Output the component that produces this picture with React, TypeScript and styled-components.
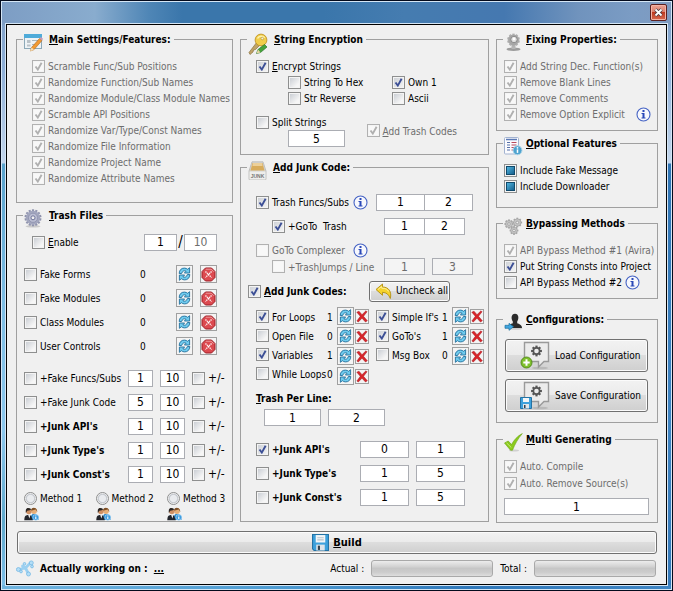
import React from "react";
import styled, { createGlobalStyle, css } from "styled-components";

const ui = `"DejaVu Sans Condensed", "DejaVu Sans", Tahoma, sans-serif`;

const GlobalStyle = createGlobalStyle`
  * { box-sizing: border-box; }
  body {
    margin: 0;
    color: #000;
    font: 10px/16px ${ui};
  }
`;

/* ---------- window frame ---------- */

const Frame = styled.div`
  min-height: 100vh;
  display: flex;
  flex-direction: column;
  border: 1px solid #030a1c;
  box-shadow: inset 0 0 0 1px #d5e6f5;
  padding: 1px 4px 4px;
  background:
    linear-gradient(90deg, #7d9dc4 0, #89acce 14%, #4f86b6 22%, #3a76ab 27%, #3a76ab 48%, #457cb0 60%, #4578b0 75%, #7093bd 86%, #7b9cc4 94%, #7f9bc0 100%) top / 100% 24px no-repeat,
    linear-gradient(90deg, #6fb4df, #4f9dd3 40%, #2f78ba 70%, #3f86c4) bottom / 100% 5px no-repeat,
    linear-gradient(180deg, #7d9dc4 0, #8fb0d8 70px, #c3d6ec 162px, #59a3cd 163px, #7dbde4 300px, #8cc8ee 430px, #5fa9cc 520px, #7fc0ea 100%) left / 50% 100% no-repeat,
    linear-gradient(180deg, #7d9dc4 0, #8fb0d8 70px, #c3d6ec 162px, #2f74b4 163px, #3f84c2 420px, #3478b8 100%) right / 50% 100% no-repeat;
`;

const TitleBar = styled.header`
  height: 21px;
  display: flex;
  justify-content: flex-end;
  align-items: center;
  padding-right: 1px;
`;

const CloseButton = styled.button`
  width: 17px;
  height: 17px;
  padding: 0;
  display: grid;
  place-items: center;
  border: 1px solid #5b2020;
  border-radius: 2px;
  box-shadow: inset 0 0 0 1px #f3b4a6;
  background: linear-gradient(#eca293 0, #dd7f6c 48%, #bf3a20 50%, #d96a50 100%);
`;

const Client = styled.main`
  flex: 1;
  border: 1px solid #000;
  outline: 1px solid #d5e6f5;
  margin: 1px;
  background: #f0f0f0;
  padding: 8px 8px 5px 9px;
`;

const Columns = styled.div`
  display: grid;
  grid-template-columns: 217fr 249fr 162fr;
  gap: 7px;
`;

const Column = styled.div`
  min-width: 0;
  display: flex;
  flex-direction: column;
`;

/* ---------- groups ---------- */

const GroupBox = styled.fieldset<{ $before?: number }>`
  min-width: 0;
  margin: ${(p) => p.$before ?? 0}px 0 0;
  padding: 0;
  border: 1px solid #a0a0a0;
`;

const GroupTitle = styled.legend<{ $tight?: boolean }>`
  display: flex;
  gap: ${(p) => (p.$tight ? 3 : 6)}px;
  height: 13px;
  margin-left: 6px;
  padding: 0 3px 0 1px;
  font: bold 10px/14px ${ui};
  white-space: nowrap;
  svg { flex: none; }
`;

const Body = styled.div<{ $top: number; $bottom: number; $left?: number; $right?: number }>`
  display: flex;
  flex-direction: column;
  padding: ${(p) => `${p.$top}px ${p.$right ?? 7}px ${p.$bottom}px ${p.$left ?? 7}px`};
`;

const Row = styled.div<{ $h?: number; $indent?: number; $end?: number; $gap?: number; $top?: number }>`
  display: flex;
  align-items: center;
  gap: ${(p) => p.$gap ?? 7}px;
  min-height: ${(p) => p.$h ?? 16}px;
  margin-top: ${(p) => p.$top ?? 0}px;
  padding-left: ${(p) => p.$indent ?? 0}px;
  padding-right: ${(p) => p.$end ?? 0}px;
`;

const Push = styled.div`
  margin-left: auto;
  display: flex;
  align-items: center;
`;

const RangeRow = styled.div`
  display: grid;
  grid-template-columns: 1fr 25px 25px 33px;
  column-gap: 7px;
  align-items: center;
  height: 24px;
`;

/* ---------- controls ---------- */

const CheckLabel = styled.label<{ $off?: boolean; $bold?: boolean }>`
  display: flex;
  align-items: center;
  gap: 3px;
  min-width: 0;
  white-space: pre;
  color: ${(p) => (p.$off ? "#6d6d6d" : "#000")};
  font-weight: ${(p) => (p.$bold ? "bold" : "normal")};
  line-height: 15px;
  span { padding-top: 1px; }
`;

const tick = (c: string) =>
  `url("data:image/svg+xml,%3Csvg xmlns='http://www.w3.org/2000/svg' width='11' height='11'%3E%3Cpath d='M2.5 5.5L4.8 8.6L8.6 1.8' fill='none' stroke='%23${c}' stroke-width='1.9'/%3E%3C/svg%3E")`;

const Box = styled.input.attrs({ type: "checkbox" })`
  appearance: none;
  flex: none;
  width: 13px;
  height: 13px;
  margin: 0;
  border: 1px solid #8e8f8f;
  box-shadow: inset 0 0 0 1px #f4f4f4;
  background: linear-gradient(135deg, #cbcfd5, #f6f6f6 80%) center / 9px 9px no-repeat #f4f4f4;
  &:checked {
    background: ${tick("3c4f96")} center no-repeat, linear-gradient(135deg, #cbcfd5, #f6f6f6);
  }
  &:disabled { border-color: #b1b1b1; background: #f8f8f8; }
  &:disabled:checked { background: ${tick("b0b0b0")} center no-repeat, #f8f8f8; }
  &[data-mixed="true"] {
    box-shadow: none;
    background: linear-gradient(135deg, #4fb4de, #17618f) center / 7px 7px no-repeat,
      linear-gradient(#114a6c, #114a6c) center / 9px 9px no-repeat, #f4f4f4;
  }
`;

const Dot = styled.input.attrs({ type: "radio" })`
  appearance: none;
  flex: none;
  width: 13px;
  height: 13px;
  margin: 0;
  border: 1px solid #8e8f8f;
  border-radius: 50%;
  background: radial-gradient(circle, #e9ebee 0 40%, #c2c6cc 55%, #f4f4f4 68%);
  &:checked { background: radial-gradient(circle, #2a6f9c 0 35%, #f4f4f4 45%); }
`;

const Num = styled.input<{ $w?: number; $join?: boolean }>`
  width: ${(p) => (p.$w ? `${p.$w}px` : "100%")};
  min-width: 0;
  height: 17px;
  padding: 0;
  border: 1px solid #abadb3;
  border-radius: 0;
  background: #fff;
  color: #000;
  text-align: center;
  font: 12px/15px ${ui};
  ${(p) => p.$join && css`margin-left: -1px;`}
  &:disabled { color: #6d6d6d; }
  &[data-flat="true"] { background: #f4f4f4; }
`;

const Slash = styled.span`
  width: 7px;
  font: 15px/17px ${ui};
  text-align: center;
`;

const Count = styled.span<{ $w: number }>`
  width: ${(p) => p.$w}px;
  line-height: 15px;
  padding-top: 1px;
`;

const Sign = styled.label`
  display: flex;
  align-items: center;
  gap: 3px;
  font: 12px/16px ${ui};
`;

const ToolButton = styled.button<{ $small?: boolean }>`
  flex: none;
  width: ${(p) => (p.$small ? 14 : 17)}px;
  height: ${(p) => (p.$small ? 15 : 18)}px;
  padding: 0;
  display: grid;
  place-items: center;
  border: 1px solid #a0a0a0;
  background: #f4f4f4;
`;

const RaisedButton = styled.button`
  display: flex;
  align-items: center;
  padding: 0;
  border: 1px solid #707070;
  border-radius: 3px;
  box-shadow: inset 0 0 0 1px #fbfbfb;
  background: linear-gradient(#f2f2f2 0, #ebebeb 48%, #dddddd 50%, #cfcfcf 100%);
  color: #000;
  font: 10px/16px ${ui};
  white-space: nowrap;
`;

const SmallButton = styled(RaisedButton)`
  width: 81px;
  height: 21px;
  padding-left: 5px;
  gap: 3px;
`;

const ConfigButton = styled(RaisedButton)`
  height: 33px;
  padding-left: 14px;
  gap: 4px;
`;

const BuildButton = styled(RaisedButton)`
  width: calc(100% - 2px);
  height: 23px;
  margin: 8px 1px 0;
  justify-content: center;
  gap: 4px;
  font: bold 11px/16px ${ui};
`;

const Heading = styled.h3`
  margin: 0;
  font: bold 10px/16px ${ui};
`;

const ConfigList = styled.div`
  display: grid;
  grid-template-columns: minmax(0, 1fr);
  gap: 7px;
`;

const SplitArea = styled.div`
  display: flex;
  justify-content: space-between;
  align-items: center;
  padding: 8px 23px 0 0;
`;

const Own = styled.div`
  display: grid;
  grid-template-columns: 104px auto;
  padding-left: 32px;
`;

const Loops = styled.div`
  display: grid;
  grid-template-columns: auto auto;
  justify-content: space-between;
  align-items: start;
  padding: 4px 4px 0 8px;
`;

const LoopBlock = styled.div<{ $w: number }>`
  display: grid;
  grid-template-columns: ${(p) => p.$w}px auto;
`;

const LoopRow = styled.div`
  display: flex;
  align-items: center;
  justify-content: space-between;
  padding-right: 3px;
  height: 19px;
`;

const ActionRow = styled.div`
  display: flex;
  align-items: center;
  gap: 1px;
  height: 18px;
  margin-bottom: 2px;
`;

const Methods = styled.div`
  display: grid;
  grid-template-columns: 1fr 1fr 58px;
  padding-top: 4px;
`;

const Method = styled.div`
  display: grid;
  gap: 1px;
`;

const StatusBar = styled.footer`
  display: flex;
  align-items: center;
  margin-top: 5px;
  height: 19px;
  white-space: nowrap;
`;

const Working = styled.span`
  flex: 1;
  display: flex;
  align-items: center;
  gap: 6px;
  font-weight: bold;
`;

const Meter = styled.div`
  width: 122px;
  height: 17px;
  margin: 0 7px 0 7px;
  border: 1px solid #a9a9a9;
  border-radius: 3px;
  background: linear-gradient(#ececec 0, #d4d4d4 35%, #c6c6c6 50%, #cccccc 75%, #dedede 100%);
  &:last-child { margin-right: 2px; }
`;

/* ---------- icons ---------- */

const FormIcon = () => (
  <svg width="19" height="19" viewBox="0 0 19 19">
    <rect x="0.5" y="1.5" width="17" height="14" fill="#eef3f6" stroke="#8da9b8" />
    <rect x="0" y="1" width="18" height="4" fill="#4fabd9" />
    <path d="M3 7h3.500v3H3zM3 11.500h3.500v2H3z" fill="#b9c2c8" />
    <path d="M8 7.500h6M8 11.500h4" stroke="#aab8c0" />
    <path d="M7.500 14.500L15.500 5.500L18 7.600L10 16.600L6.400 18Z" fill="#f29a32" stroke="#a7651d" strokeWidth=".6" />
    <path d="M15.500 5.500L17 3.900L19 5.800L18 7.600Z" fill="#c79ab8" />
    <path d="M7.500 14.500L10 16.600L6 18.400Z" fill="#f5dfb8" />
  </svg>
);

const gearTeeth = (cx: number, cy: number, r: number, n: number, w: number, color: string) =>
  Array.from({ length: n }, (_, i) => (
    <rect key={i} x={cx - w / 2} y={cy - r} width={w} height={r} fill={color} transform={`rotate(${(i * 360) / n} ${cx} ${cy})`} />
  ));

const GearIcon = () => (
  <svg width="19" height="19" viewBox="0 0 19 19">
    <ellipse cx="9" cy="17.300" rx="7.500" ry="1.200" fill="#cacaca" />
    {gearTeeth(9, 8.8, 8.5, 14, 2.2, "#8f93ad")}
    <circle cx="9" cy="8.800" r="7.100" fill="#a3a7bf" />
    <circle cx="9" cy="8.800" r="4.600" fill="#babdd2" stroke="#8d91ac" strokeWidth=".8" />
    <circle cx="9" cy="8.800" r="2" fill="#f0f0f0" stroke="#70759a" />
  </svg>
);

const KeyIcon = () => (
  <svg width="20" height="22" viewBox="0 0 20 22">
    <path d="M9 9L1 19.500L2 21.500L5 19L5.500 17L7.500 16.500L12 12Z" fill="#c0a468" stroke="#8d7443" strokeWidth=".7" />
    <circle cx="13" cy="7" r="5.900" fill="#f0cd4a" stroke="#bb8d1d" strokeWidth=".8" />
    <path d="M9.500 5.500C11 2.500 15 2.500 16.500 5" fill="none" stroke="#fdf1ad" strokeWidth="1.600" />
    <circle cx="14.300" cy="5.500" r="1.300" fill="#f4f0dc" stroke="#a8821d" strokeWidth=".5" />
    <path d="M10 16.500L16.500 11.500L19 14L12.500 19.500L8.500 20.500Z" fill="#45a33b" stroke="#2b7328" strokeWidth=".7" />
    <path d="M10 16.500L12.500 19.500L8.500 20.500Z" fill="#e9d6a2" />
  </svg>
);

const JunkIcon = () => (
  <svg width="19" height="20" viewBox="0 0 19 20">
    <path d="M1 10L4 .8H15L18 10V18.500H1Z" fill="#d5d5d3" stroke="#b7b7b5" strokeWidth=".8" />
    <path d="M4.500 2H14.500L16.500 9.500H2.500Z" fill="#d8ac5c" />
    <path d="M5 2H14L14.600 5H4.400Z" fill="#ecd09a" />
    <rect x="1.500" y="10.500" width="16" height="8" fill="#eeeeec" />
    <text x="9.500" y="16.500" textAnchor="middle" fontSize="5" fontWeight="bold" fontFamily="Liberation Sans, sans-serif" fill="#777">JUNK</text>
  </svg>
);

const CamIcon = () => (
  <svg width="19" height="19" viewBox="0 0 19 19">
    <ellipse cx="9.500" cy="16.300" rx="7" ry="1.700" fill="#9c9c9c" />
    <path d="M7.500 11h4v5h-4z" fill="#b5b5b5" />
    {gearTeeth(9.5, 7, 6.4, 10, 2.4, "#b2b2b2")}
    <circle cx="9.500" cy="7" r="5.400" fill="#a6a6a6" />
    <circle cx="10" cy="6.500" r="3.200" fill="#dedede" stroke="#7c7c7c" strokeWidth=".8" />
    <circle cx="10" cy="6" r="1.400" fill="#fff" />
  </svg>
);

const SheetIcon = () => (
  <svg width="19" height="19" viewBox="0 0 19 19">
    <rect x="0.500" y="0.500" width="14" height="16.500" rx="1" fill="#fbfbfe" stroke="#a3b3d0" />
    <path d="M2 2.500h11" stroke="#5b79b5" strokeWidth="1.500" />
    <path d="M3 5.500h3M3 8h3M3 10.500h3M3 13h3" stroke="#5570a8" />
    <path d="M7.500 5.500h5M7.500 8h5M7.500 10.500h5M7.500 13h3" stroke="#b8495a" />
    <circle cx="13.500" cy="13.300" r="4.500" fill="#4ea3d0" stroke="#b3d7e8" />
    <path d="M13.500 12.400v3.500" stroke="#fff" strokeWidth="1.500" />
    <circle cx="13.500" cy="10.800" r=".9" fill="#fff" />
  </svg>
);

const GearsIcon = () => (
  <svg width="19" height="19" viewBox="0 0 19 19">
    {[[5, 7, 4.6], [13.3, 5.5, 4.8], [10, 13.5, 4.4]].map(([x, y, r], i) => (
      <g key={i}>
        {gearTeeth(x, y, r, 8, 1.8, "#a6a6a6")}
        <circle cx={x} cy={y} r={r - 1.1} fill="#c4c4c4" stroke="#9c9c9c" strokeWidth=".6" />
        <circle cx={x} cy={y} r="1.300" fill="#f0f0f0" stroke="#8a8a8a" strokeWidth=".6" />
      </g>
    ))}
  </svg>
);

const UserIcon = () => (
  <svg width="19" height="19" viewBox="0 0 19 19">
    <ellipse cx="11" cy="15.500" rx="7.500" ry="1.300" fill="#cfcfcf" />
    <path d="M4 15C4 11.500 7 11 8.800 10.200V8.500C6.800 5.500 7.200 .8 11 .8S15.200 5.500 13.200 8.500V10.200C15 11 18 11.500 18 15Z" fill="#2b2b2b" />
    <path d="M1 12.300H5V10.300L9.500 13.800L5 17.300V15.300H1Z" fill="#3fa6e0" stroke="#1d6e9e" strokeWidth=".7" />
  </svg>
);

const CheckIcon = () => (
  <svg width="19" height="20" viewBox="0 0 19 20">
    <ellipse cx="10" cy="17.500" rx="5" ry="1" fill="#d0d0d0" />
    <path d="M.5 10L4.200 8L7.500 11.500C10 7 13.500 3 18.300 .6C14 5.500 11 11 8.500 17.200H6.500Z" fill="#8bcb1c" stroke="#66a30e" strokeWidth=".6" />
    <path d="M2.500 9.800L7.300 14.500" stroke="#c6ec7c" />
  </svg>
);

const InfoIcon = () => (
  <svg width="15" height="15" viewBox="0 0 15 15">
    <circle cx="7.500" cy="7.500" r="6.500" fill="#f7f8fd" stroke="#4563c4" strokeWidth="1.100" />
    <rect x="6.500" y="3" width="2" height="2" fill="#2a48b8" />
    <path d="M5.500 6h3v4.500H9.500v1h-4v-1H6.500V7h-1Z" fill="#2a48b8" />
  </svg>
);

const RefreshIcon = () => (
  <svg width="13" height="14" viewBox="0 0 13 14">
    <path d="M1.200 6.500C1.200 3 3.500 1.100 6.300 1.100C7.800 1.100 8.800 1.600 9.600 2.300L11.600 .7V6H6.400L8.100 4.200C6.500 3.300 4.300 3.800 3.600 6.500Z" fill="#6fcbee" stroke="#226f9c" strokeWidth=".9" />
    <path d="M11.800 7.500C11.800 11 9.500 12.900 6.700 12.900C5.200 12.900 4.200 12.400 3.400 11.700L1.400 13.300V8H6.600L4.900 9.800C6.500 10.700 8.700 10.200 9.400 7.500Z" fill="#6fcbee" stroke="#226f9c" strokeWidth=".9" />
  </svg>
);

const StopIcon = () => (
  <svg width="15" height="15" viewBox="0 0 15 15">
    <path d="M4.500 1H10.500L14 4.500V10.500L10.500 14H4.500L1 10.500V4.500Z" fill="#dc4a50" stroke="#9c1f27" />
    <path d="M4.800 2.200H10.200L12.600 4.700" fill="none" stroke="#f09a9c" />
    <path d="M4.500 4.500L10.500 10.500M10.500 4.500L4.500 10.500" stroke="#fff" strokeWidth="1.300" strokeDasharray="1.300 .7" />
  </svg>
);

const CrossIcon = () => (
  <svg width="12" height="13" viewBox="0 0 12 13">
    <path d="M.8 2.200L3 1.200L6 4.700L10 .8L11 1.800L7.500 6.300L11.300 10.700L9.500 12L6 8.200L2.300 12L.9 11L4.300 6.300Z" fill="#d8252a" stroke="#a5151b" strokeWidth=".5" />
  </svg>
);

const UndoIcon = () => (
  <svg width="18" height="17" viewBox="0 0 18 17">
    <path d="M1 6.500L7.500 1V4C13.500 4 17 8.500 15.300 15.500C13.800 11.500 11.500 9.500 7.500 9.300V12.300Z" fill="#f6d32c" stroke="#b28f12" strokeWidth=".9" />
    <path d="M3 6.500L6.700 3.400V5.200C10.500 5.200 12.500 6.200 13.600 8.500" fill="none" stroke="#fdf0a0" />
  </svg>
);

const Floppy = ({ s = 16 }: { s?: number }) => (
  <svg width={s} height={s} viewBox="0 0 16 16">
    <path d="M.5 .5H15.500V15.500H2L.5 14Z" fill="#3da1dc" stroke="#2473a5" />
    <rect x="3.500" y="1" width="9" height="7" fill="#f3f6f8" />
    <path d="M5 3.500h6M5 5.500h6" stroke="#b7c3cb" />
    <rect x="4" y="10" width="8" height="5.500" fill="#dfe5ea" />
    <rect x="5.500" y="11" width="2" height="4" fill="#33414d" />
  </svg>
);

const ConfigIcon = ({ save }: { save?: boolean }) => (
  <svg width="31" height="29" viewBox="0 0 31 29">
    <ellipse cx="20" cy="27" rx="8" ry="1.300" fill="#b9b9b9" />
    <path d="M4.500 1.500H28.500V20.500H24L18.500 26V20.500H4.500Z" fill="#ececec" stroke="#9a9a9a" strokeWidth="1.400" />
    {gearTeeth(16.5, 10, 5.4, 8, 2.2, "#555")}
    <circle cx="16.500" cy="10" r="3.900" fill="#555" />
    <circle cx="16.500" cy="10" r="2.300" fill="#ececec" />
    {save ? (
      <g transform="translate(0 16)">
        <path d="M.5 .5H11.500V11.500H.5Z" fill="#3da1dc" stroke="#2473a5" />
        <path d="M3 1h6v4H3z" fill="#f3f6f8" />
        <path d="M3 7h6v4.500H3z" fill="#dfe5ea" />
        <path d="M4 8h1.500v3H4z" fill="#33414d" />
      </g>
    ) : (
      <g>
        <circle cx="6.500" cy="21.500" r="5.500" fill="#7fc02c" stroke="#4e8517" strokeWidth=".9" />
        <path d="M6.500 18.300v6.400M3.300 21.500h6.400" stroke="#fff" strokeWidth="2" />
      </g>
    )}
  </svg>
);

const PeopleIcon = () => (
  <svg width="15" height="14" viewBox="0 0 15 14">
    <path d="M6.500 13V9.500L8.500 7H12L14.500 9.500V13Z" fill="#2d8bd0" />
    <circle cx="10" cy="4" r="2.900" fill="#e6ae78" />
    <path d="M7 3.800C7 -.3 13.300 -.3 13.300 5L11.800 2.600Z" fill="#7d4f26" />
    <path d="M.3 13.200C.3 9.500 1.500 8.300 3.500 8L7 8.500L8.800 13.200Z" fill="#23252c" />
    <circle cx="4.800" cy="4.600" r="2.700" fill="#cf9064" />
    <path d="M1.900 6C.8 .6 4.500 .2 7.400 2.300L5.800 3.300L3.200 3.800Z" fill="#2a2522" />
    <path d="M4.300 8L5.300 11.500L6.300 8.300Z" fill="#fff" />
    <circle cx="11.800" cy="10.300" r="2.900" fill="#3b9be0" stroke="#bfe0f6" strokeWidth=".6" />
    <path d="M11.800 8.500v.9M11.800 10v2" stroke="#fff" strokeWidth="1.100" />
  </svg>
);

const LinkIcon = () => (
  <svg width="18" height="17" viewBox="0 0 18 17">
    <path d="M2 9.500L9.500 8L14 3.200M9.500 8L12.300 13.500M9.500 8L6.500 6" fill="none" stroke="#9bd0f1" strokeWidth="2.800" strokeLinecap="round" />
    {[[2.4, 9.5, 2], [15.3, 2.9, 2], [12.5, 14, 2], [16, 6.5, 1.4], [8.5, 3.8, 1.3], [5, 11.5, 1.4]].map(([x, y, r], i) => (
      <circle key={i} cx={x} cy={y} r={r} fill="#b4def7" stroke="#6fb5e2" strokeWidth=".7" />
    ))}
  </svg>
);

/* ---------- composed parts ---------- */

type CheckProps = { text: string; on?: boolean; off?: boolean; bold?: boolean; u?: boolean; mixed?: boolean };

const Hot = ({ text }: { text: string }) => (
  <span>
    <u>{text[0]}</u>
    {text.slice(1)}
  </span>
);

const Check = ({ text, on, off, bold, u, mixed }: CheckProps) => (
  <CheckLabel $off={off} $bold={bold}>
    <Box defaultChecked={on} disabled={off} data-mixed={mixed} />
    {u ? <Hot text={text} /> : <span>{text}</span>}
  </CheckLabel>
);

type GroupProps = { title: string; icon: React.ReactNode; before?: number; tight?: boolean; children: React.ReactNode };

const Group = ({ title, icon, before, tight, children }: GroupProps) => (
  <GroupBox $before={before}>
    <GroupTitle $tight={tight}>
      {icon}
      <Hot text={title} />
    </GroupTitle>
    {children}
  </GroupBox>
);

const Refresh = ({ name }: { name: string }) => (
  <ToolButton type="button" aria-label={`Refresh ${name}`}>
    <RefreshIcon />
  </ToolButton>
);

type Loop = [string, number, boolean];

const LoopList = ({ items, width }: { items: Loop[]; width: number }) => (
  <LoopBlock $w={width}>
    <div>
      {items.map(([name, count, on]) => (
        <LoopRow key={name}>
          <Check text={name} on={on} />
          <Count $w={7}>{count}</Count>
        </LoopRow>
      ))}
    </div>
    <div>
      {items.map(([name]) => (
        <ActionRow key={name}>
          <Refresh name={name} />
          <ToolButton type="button" $small aria-label={`Clear ${name}`}>
            <CrossIcon />
          </ToolButton>
        </ActionRow>
      ))}
    </div>
  </LoopBlock>
);

const mainSettings = [
  "Scramble Func/Sub Positions",
  "Randomize Function/Sub Names",
  "Randomize Module/Class Module Names",
  "Scramble API Positions",
  "Randomize Var/Type/Const Names",
  "Randomize File Information",
  "Randomize Project Name",
  "Randomize Attribute Names",
];

const ranges: [string, string, boolean][] = [
  ["+Fake Funcs/Subs", "1", false],
  ["+Fake Junk Code", "5", false],
  ["+Junk API's", "1", true],
  ["+Junk Type's", "1", true],
  ["+Junk Const's", "1", true],
];

const junkRows: [string, string, string, boolean][] = [
  ["+Junk API's", "0", "1", true],
  ["+Junk Type's", "1", "5", false],
  ["+Junk Const's", "1", "5", false],
];

export default function App() {
  return (
    <>
      <GlobalStyle />
      <Frame>
        <TitleBar>
          <CloseButton type="button" aria-label="Close">
            <svg width="9" height="9" viewBox="0 0 9 9">
              <path d="M1.500 1.500L7.500 7.500M7.500 1.500L1.500 7.500" stroke="#4a3a42" strokeWidth="3.400" />
              <path d="M1.500 1.500L7.500 7.500M7.500 1.500L1.500 7.500" stroke="#fff" strokeWidth="1.800" />
            </svg>
          </CloseButton>
        </TitleBar>
        <Client>
          <Columns>
            <Column>
              <Group title="Main Settings/Features:" icon={<FormIcon />}>
                <Body $top={12} $bottom={16} $left={15} $right={0}>
                  {mainSettings.map((t) => (
                    <Row key={t}>
                      <Check text={t} on off />
                    </Row>
                  ))}
                </Body>
              </Group>
              <Group title="Trash Files" icon={<GearIcon />} before={6}>
                <Body $top={8} $bottom={0}>
                  <Row $h={24} $indent={8} $end={8}>
                    <Check text="Enable" u />
                    <Push>
                      <Num $w={33} defaultValue="1" aria-label="Minimum files" />
                      <Slash>/</Slash>
                      <Num $w={33} defaultValue="10" disabled aria-label="Maximum files" />
                    </Push>
                  </Row>
                  <Row $h={8} />
                  {["Fake Forms", "Fake Modules", "Class Modules", "User Controls"].map((t) => (
                    <Row key={t} $h={24} $end={8}>
                      <Check text={t} />
                      <Push>
                        <Count $w={36}>0</Count>
                        <Row>
                          <Refresh name={t} />
                          <ToolButton type="button" aria-label={`Remove ${t}`}>
                            <StopIcon />
                          </ToolButton>
                        </Row>
                      </Push>
                    </Row>
                  ))}
                  <Row $h={8} />
                  {ranges.map(([t, v, bold]) => (
                    <RangeRow key={t}>
                      <Check text={t} bold={bold} />
                      <Num defaultValue={v} aria-label={`${t} minimum`} />
                      <Num defaultValue="10" aria-label={`${t} maximum`} />
                      <Sign>
                        <Box />
                        +/-
                      </Sign>
                    </RangeRow>
                  ))}
                  <Methods>
                    {[1, 2, 3].map((n) => (
                      <Method key={n}>
                        <CheckLabel>
                          <Dot name="method" />
                          <span>Method {n}</span>
                        </CheckLabel>
                        <PeopleIcon />
                      </Method>
                    ))}
                  </Methods>
                </Body>
              </Group>
            </Column>

            <Column>
              <Group title="String Encryption" icon={<KeyIcon />}>
                <Body $top={12} $bottom={7} $left={15} $right={0}>
                  <Row>
                    <Check text="Encrypt Strings" on u />
                  </Row>
                  <Own>
                    <Check text="String To Hex" />
                    <Check text="Own 1" on />
                    <Check text="Str Reverse" />
                    <Check text="Ascii" />
                  </Own>
                  <SplitArea>
                    <div>
                      <Check text="Split Strings" />
                      <Row $indent={32} $h={17}>
                        <Num $w={57} defaultValue="5" aria-label="Split length" />
                      </Row>
                    </div>
                    <Row $end={8}>
                      <Check text="Add Trash Codes" on off u />
                    </Row>
                  </SplitArea>
                </Body>
              </Group>
              <Group title="Add Junk Code:" icon={<JunkIcon />} before={6}>
                <Body $top={16} $bottom={12} $right={0}>
                  <Row $h={24} $indent={8} $end={15}>
                    <Check text="Trash Funcs/Subs" on />
                    <Push>
                      <Row $end={8}>
                        <InfoIcon />
                      </Row>
                      <Num $w={49} defaultValue="1" aria-label="Trash functions minimum" />
                      <Num $w={49} $join defaultValue="2" aria-label="Trash functions maximum" />
                    </Push>
                  </Row>
                  <Row $h={24} $indent={24} $end={23}>
                    <Check text="+GoTo  Trash" on />
                    <Push>
                      <Num $w={41} defaultValue="1" aria-label="GoTo trash minimum" />
                      <Num $w={41} $join defaultValue="2" aria-label="GoTo trash maximum" />
                    </Push>
                  </Row>
                  <Row $top={4} $indent={8} $end={120}>
                    <Check text="GoTo Complexer" off />
                    <Push>
                      <InfoIcon />
                    </Push>
                  </Row>
                  <Row $indent={24} $end={15}>
                    <Check text="+TrashJumps / Line" off />
                    <Push>
                      <Row>
                        <Num $w={41} defaultValue="1" disabled data-flat="true" aria-label="Trash jumps minimum" />
                        <Num $w={41} defaultValue="3" disabled data-flat="true" aria-label="Trash jumps maximum" />
                      </Row>
                    </Push>
                  </Row>
                  <Row $h={24} $top={4} $end={38}>
                    <Check text="Add Junk Codes:" on bold u />
                    <Push>
                      <SmallButton type="button">
                        <UndoIcon />
                        Uncheck all
                      </SmallButton>
                    </Push>
                  </Row>
                  <Loops>
                    <LoopList
                      width={81}
                      items={[["For Loops", 1, true], ["Open File", 0, false], ["Variables", 1, true], ["While Loops", 0, false]]}
                    />
                    <LoopList width={76} items={[["Simple If's", 1, true], ["GoTo's", 1, true], ["Msg Box", 0, false]]} />
                  </Loops>
                  <Row $indent={8} $top={4}>
                    <Heading>
                      <Hot text="Trash Per Line:" />
                    </Heading>
                  </Row>
                  <Row $indent={16} $top={2} $h={17}>
                    <Num $w={57} defaultValue="1" aria-label="Trash per line minimum" />
                    <Num $w={57} defaultValue="2" aria-label="Trash per line maximum" />
                  </Row>
                  <Row $h={11} />
                  {junkRows.map(([t, a, b, on]) => (
                    <Row key={t} $h={24} $indent={8} $end={23}>
                      <Check text={t} on={on} bold />
                      <Push>
                        <Row>
                          <Num $w={49} defaultValue={a} aria-label={`${t} minimum`} />
                          <Num $w={49} defaultValue={b} aria-label={`${t} maximum`} />
                        </Row>
                      </Push>
                    </Row>
                  ))}
                </Body>
              </Group>
            </Column>

            <Column>
              <Group title="Fixing Properties:" icon={<CamIcon />} tight>
                <Body $top={12} $bottom={8} $right={6}>
                  <Row><Check text="Add String Dec. Function(s)" on off /></Row>
                  <Row><Check text="Remove Blank Lines" on off /></Row>
                  <Row><Check text="Remove Comments" on off /></Row>
                  <Row>
                    <Check text="Remove Option Explicit" on off />
                    <Push><InfoIcon /></Push>
                  </Row>
                </Body>
              </Group>
              <Group title="Optional Features" icon={<SheetIcon />} before={6} tight>
                <Body $top={12} $bottom={13}>
                  <Row><Check text="Include Fake Message" mixed /></Row>
                  <Row><Check text="Include Downloader" mixed /></Row>
                </Body>
              </Group>
              <Group title="Bypassing Methods" icon={<GearsIcon />} before={9} tight>
                <Body $top={12} $bottom={8} $right={0}>
                  <Row><Check text="API Bypass Method #1 (Avira)" on off /></Row>
                  <Row><Check text="Put String Consts into Project" on /></Row>
                  <Row $gap={3}>
                    <Check text="API Bypass Method #2" />
                    <InfoIcon />
                  </Row>
                </Body>
              </Group>
              <Group title="Configurations:" icon={<UserIcon />} before={14} tight>
                <Body $top={13} $bottom={10} $left={8} $right={9}>
                  <ConfigList>
                    <ConfigButton type="button"><ConfigIcon />Load Configuration</ConfigButton>
                    <ConfigButton type="button"><ConfigIcon save />Save Configuration</ConfigButton>
                  </ConfigList>
                </Body>
              </Group>
              <Group title="Multi Generating" icon={<CheckIcon />} before={10} tight>
                <Body $top={12} $bottom={7}>
                  <Row><Check text="Auto. Compile" on off /></Row>
                  <Row $top={1}><Check text="Auto. Remove Source(s)" on off /></Row>
                  <Row $h={17} $top={7} $end={1}>
                    <Num defaultValue="1" aria-label="Generate count" />
                  </Row>
                </Body>
              </Group>
            </Column>
          </Columns>

          <BuildButton type="button">
            <Floppy s={17} />
            <Hot text="Build" />
          </BuildButton>

          <StatusBar>
            <Working>
              <LinkIcon />
              <span>
                Actually working on :&nbsp; <u>...</u>
              </span>
            </Working>
            <span>Actual :</span>
            <Meter role="progressbar" aria-label="Actual" />
            <span>Total :</span>
            <Meter role="progressbar" aria-label="Total" />
          </StatusBar>
        </Client>
      </Frame>
    </>
  );
}
